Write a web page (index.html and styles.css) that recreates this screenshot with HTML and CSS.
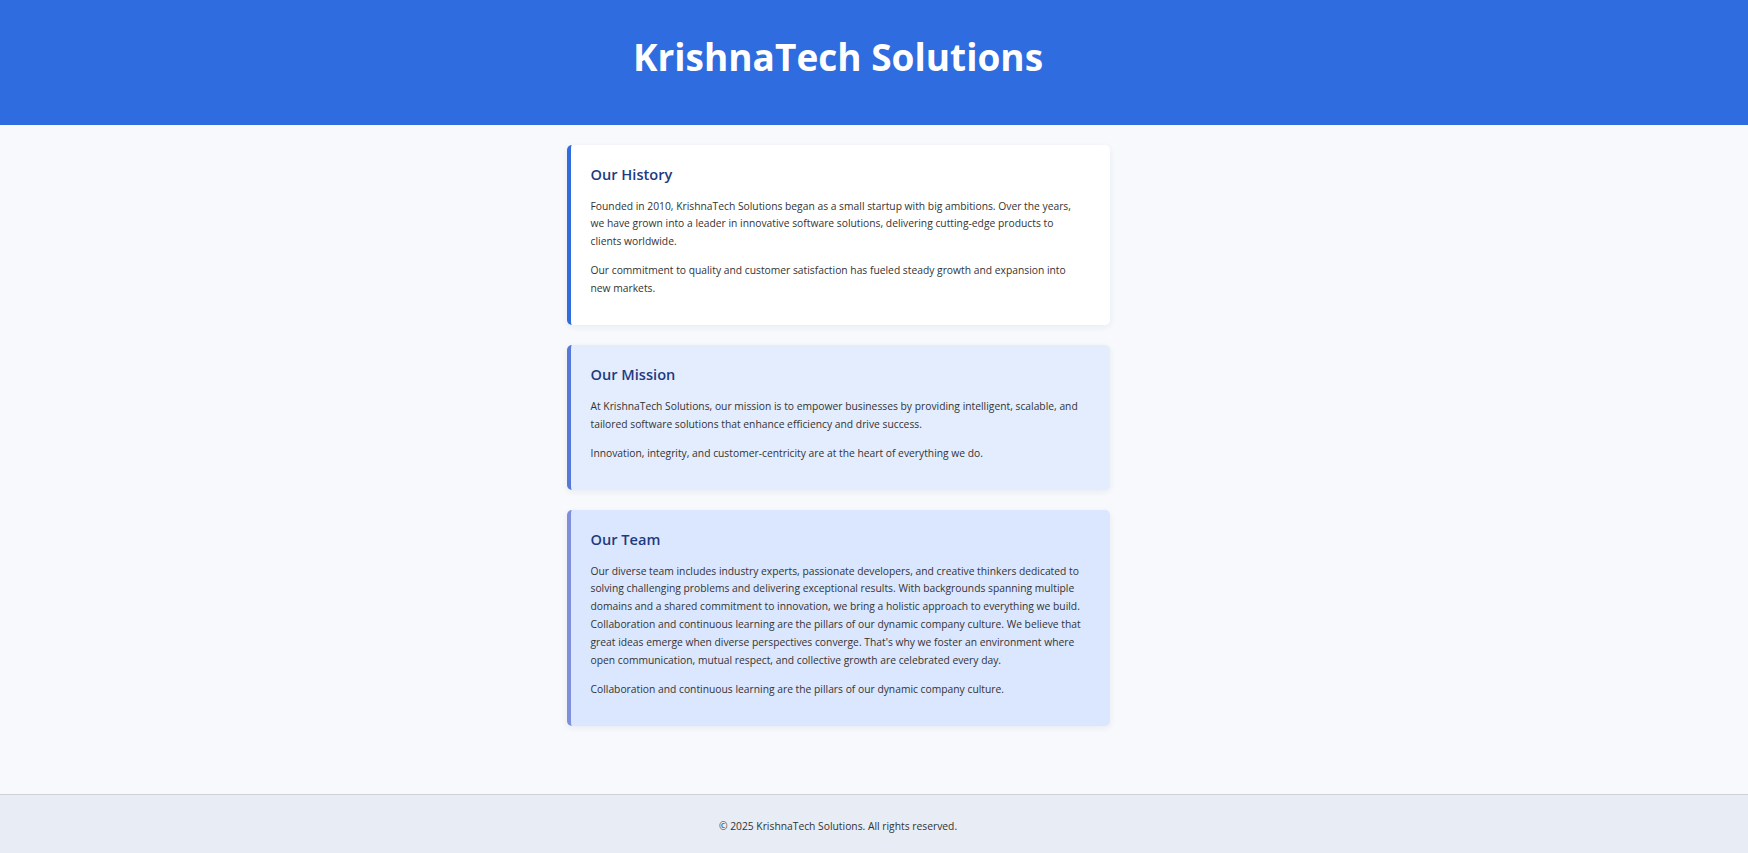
FILE: index.html
```html
<!DOCTYPE html>
<html lang="en">
<head>
<meta charset="utf-8">
<title>KrishnaTech Solutions</title>
<link rel="stylesheet" href="styles.css">
</head>
<body>
  <header class="site-header">
    <div class="shell">
      <h1 class="brand">KrishnaTech Solutions</h1>
    </div>
  </header>

  <main class="site-main">
    <div class="shell stack">
      <section class="card card-history">
        <h2 class="card-title">Our History</h2>
        <p>Founded in 2010, KrishnaTech Solutions began as a small startup with big ambitions. Over the years, we have grown into a leader in innovative software solutions, delivering cutting-edge products to clients worldwide.</p>
        <p>Our commitment to quality and customer satisfaction has fueled steady growth and expansion into new markets.</p>
      </section>

      <section class="card card-mission">
        <h2 class="card-title">Our Mission</h2>
        <p>At KrishnaTech Solutions, our mission is to empower businesses by providing intelligent, scalable, and tailored software solutions that enhance efficiency and drive success.</p>
        <p>Innovation, integrity, and customer-centricity are at the heart of everything we do.</p>
      </section>

      <section class="card card-team">
        <h2 class="card-title">Our Team</h2>
        <p>Our diverse team includes industry experts, passionate developers, and creative thinkers dedicated to solving challenging problems and delivering exceptional results. With backgrounds spanning multiple domains and a shared commitment to innovation, we bring a holistic approach to everything we build. Collaboration and continuous learning are the pillars of our dynamic company culture. We believe that great ideas emerge when diverse perspectives converge. That's why we foster an environment where open communication, mutual respect, and collective growth are celebrated every day.</p>
        <p>Collaboration and continuous learning are the pillars of our dynamic company culture.</p>
      </section>
    </div>
  </main>

  <footer class="site-footer">
    <div class="shell">
      <p class="copyright">&copy; 2025 KrishnaTech Solutions. All rights reserved.</p>
    </div>
  </footer>
</body>
</html>
```

FILE: styles.css
```css
* {
  box-sizing: border-box;
}

html, body {
  margin: 0;
  padding: 0;
}

body {
  min-height: 100vh;
  display: flex;
  flex-direction: column;
  background: #f7f9fc;
  color: #333333;
  font-family: "Open Sans", "Noto Sans", "DejaVu Sans", sans-serif;
  font-size: 10.3px;
  line-height: 17.9px;
}

.shell {
  padding-right: 72px;
}

/* Header */
.site-header {
  background: #2e6cdf;
  height: 125px;
  padding-top: 34px;
}

.brand {
  margin: 0;
  text-align: center;
  color: #ffffff;
  font-size: 37px;
  font-weight: 700;
  line-height: 45px;
}

/* Main */
.site-main {
  flex: 1;
  padding-top: 20px;
}

.stack {
  display: flex;
  flex-direction: column;
  align-items: center;
  gap: 20px;
}

.card {
  width: 543px;
  border-left: 4px solid #2e6cdf;
  border-radius: 5px;
  padding: 20px 25px 16px 20px;
  background: #ffffff;
  box-shadow: 0 2px 6px rgba(30, 50, 90, 0.07);
}

.card-mission {
  background: #e3edfe;
  border-left-color: #5579d8;
}

.card-team {
  background: #dbe7fe;
  border-left-color: #7f8fda;
}

.card-title {
  margin: 0 0 13px;
  color: #1e3a80;
  font-size: 14.6px;
  font-weight: 600;
  line-height: 19.5px;
}

.card p {
  margin: 0 0 11.2px;
}

/* Footer */
.site-footer {
  background: #e8ecf4;
  border-top: 1px solid #cfd2d8;
  padding: 23px 0 17px;
}

.copyright {
  margin: 0;
  text-align: center;
}
```
